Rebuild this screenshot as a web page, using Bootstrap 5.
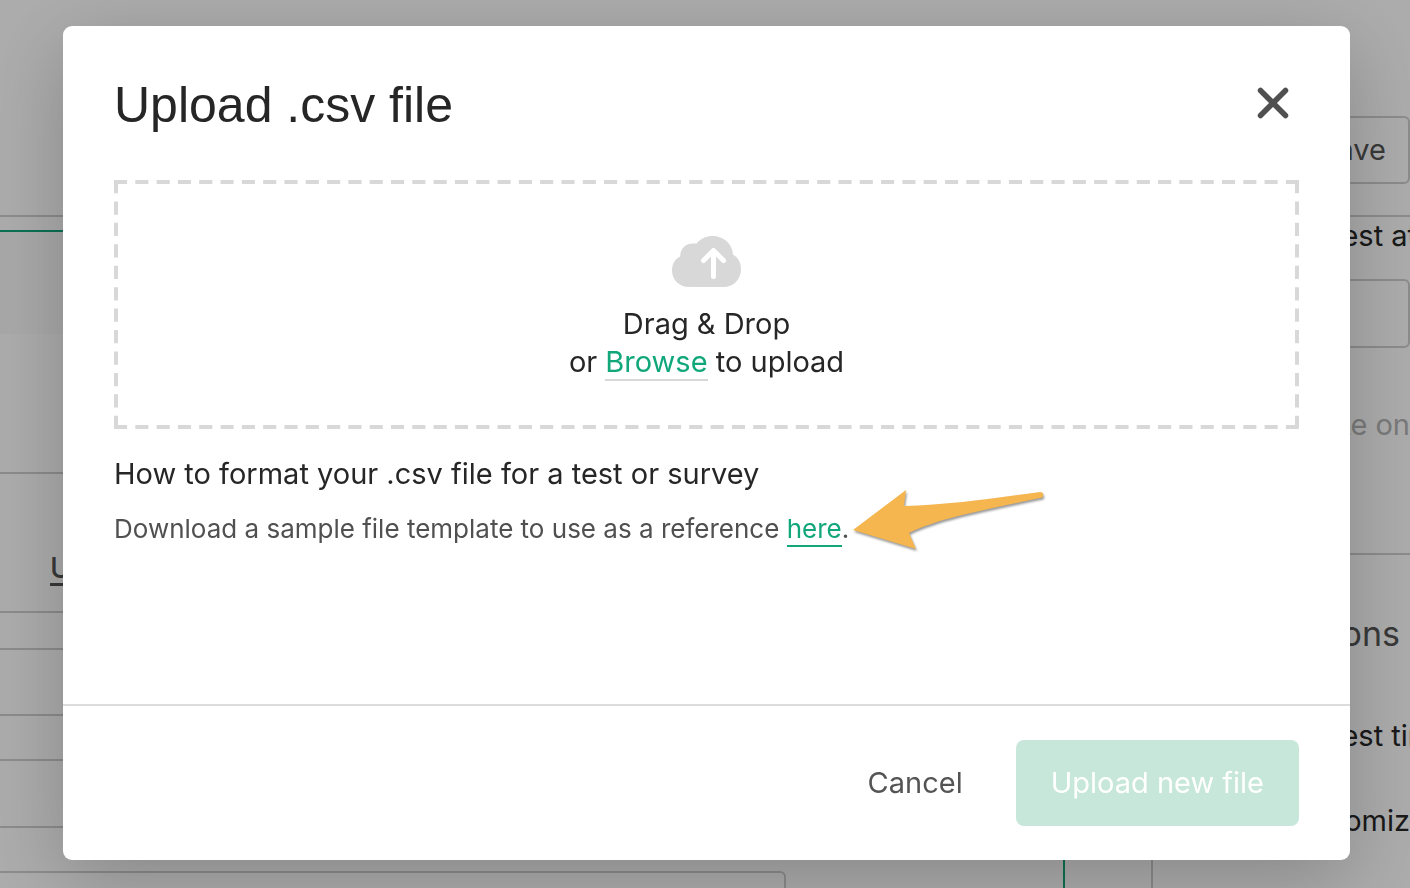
<!DOCTYPE html>
<html lang="en">
<head>
<meta charset="utf-8">
<meta name="viewport" content="width=device-width, initial-scale=1">
<title>Upload .csv file</title>
<link href="https://cdn.jsdelivr.net/npm/bootstrap@5.3.0/dist/css/bootstrap.min.css" rel="stylesheet">
<style>
  body { font-family: Inter, "Liberation Sans", sans-serif; font-size: 29px; line-height: 38px; color: #262626; background: #fff; }
  .page-behind { height: 100vh; overflow: hidden; }
  .rule { border-color: #cfcfcf !important; border-width: 0; border-style: solid; }
  .top-bar { height: 217px; border-bottom-width: 2px; }
  .save-btn { height: 68px; margin-top: 116px; border: 2px solid #cfcfcf; border-radius: 6px; background: #fff; color: #545454; padding: 0 22px; }
  .editor { width: 1065px; margin-top: 13px; border-top: 2px solid #11a77b; border-right: 2px solid #11a77b; }
  .editor-head { height: 102px; background: #fafafa; }
  .line-row { border-bottom: 2px solid #cfcfcf; }
  .h-a { height: 140px; } .h-b { height: 139px; } .h-c { height: 37px; }
  .h-d { height: 66px; } .h-e { height: 45px; } .h-f { height: 67px; }
  .tool-u { padding: 75px 0 0 50px; font-weight: 500; color: #545454; text-decoration: underline; text-decoration-thickness: 3px; text-underline-offset: 5px; }
  .inner-card { width: 786px; height: 80px; margin-top: 43px; border: 2px solid #cfcfcf; border-left: 0; border-radius: 0 6px 0 0; }
  .side { width: 259px; border-left: 2px solid #cfcfcf; white-space: nowrap; }
  .side-test { padding-left: 172px; }
  .side-field { height: 69px; border: 2px solid #cfcfcf; border-radius: 6px; margin: 24px 0 58px; width: 100%; }
  .side-line { border-bottom: 2px solid #cfcfcf; height: 111px; }
  .side-title { font-size: 34px; color: #545454; padding: 60px 10px 64px 0; }
  .side-last { margin-top: 47px; }
  .muted-text { color: #b5b5b5; }
  .shade { background: rgba(0,0,0,.325); }
  .upload-dialog { max-width: none; margin: 26px 60px 28px 63px; }
  .upload-box { border: 0; border-radius: 9px; box-shadow: 0 20px 80px rgba(0,0,0,.22); }
  .upload-head { padding: 47px 51px 0; border: 0; }
  .upload-head h1 { font-family: "Liberation Sans", sans-serif; font-size: 50px; line-height: 64px; font-weight: 400; }
  .close-x { width: 52px; height: 52px; }
  .upload-body { padding: 43px 51px 0; min-height: 567px; }
  .drop-zone { padding: 56px 0 46px; height: 249px; }
  .drop-text { margin-top: 17px; }
  .dashes { stroke: #d8d8d8; stroke-width: 8; fill: none; }
  .dashes line { stroke-dasharray: 8 5; }
  .browse { background: none; border: 0; border-bottom: 2px solid #d8d8d8; color: #11a77b; padding: 0; line-height: 34px; }
  .how-to { font-size: 29px; line-height: 38px; font-weight: 400; margin: 26px 0 18px; }
  .sample { font-size: 26px; line-height: 36px; color: #505050; }
  .sample a { color: #11a77b; text-decoration: none; border-bottom: 2px solid #11a77b; padding-bottom: 1px; }
  .pointer { width: 200px; height: 72px; left: 100%; bottom: 0; margin-bottom: -12px; filter: drop-shadow(1px 2px 1px rgba(0,0,0,.4)); }
  .upload-foot { border-top: 2px solid #dcdcdc; padding: 34px 51px; gap: 18px; border-radius: 0 0 9px 9px; }
  .foot-btn { font-size: 29px; line-height: 38px; padding: 24px 35px; border: 0; border-radius: 8px; }
  .cancel-btn { color: #545454; }
  .foot-btn.send-btn:disabled { background: #c7e7da; color: #fff; opacity: 1; }
</style>
</head>
<body>
<div class="page-behind d-flex flex-column" aria-hidden="true">
  <header class="top-bar rule d-flex justify-content-end align-items-start flex-shrink-0">
    <button class="save-btn" type="button" tabindex="-1">Save</button>
  </header>
  <div class="d-flex justify-content-between flex-grow-1">
    <main class="editor">
      <div class="editor-head"></div>
      <div class="line-row h-a"></div>
      <div class="line-row h-b tool-u">U</div>
      <div class="line-row h-c"></div>
      <div class="line-row h-d"></div>
      <div class="line-row h-e"></div>
      <div class="line-row h-f"></div>
      <div class="inner-card"></div>
    </main>
    <aside class="side">
      <label class="d-block side-test" for="attempts">Test at</label>
      <input class="side-field d-block" id="attempts" type="text" tabindex="-1">
      <div class="muted-text text-end">Take on</div>
      <div class="side-line"></div>
      <div class="side-title text-end">Options</div>
      <div class="side-test">Test tim</div>
      <div class="side-last text-end">Customiz</div>
    </aside>
  </div>
</div>
<div class="shade position-fixed top-0 start-0 w-100 h-100"></div>

<div class="modal d-block" role="dialog" aria-modal="true" aria-labelledby="dialogTitle">
  <div class="modal-dialog upload-dialog">
    <div class="modal-content upload-box">
      <div class="modal-header upload-head d-flex justify-content-between align-items-center">
        <h1 class="modal-title" id="dialogTitle">Upload .csv file</h1>
        <button class="btn p-0 close-x" type="button" aria-label="Close">
          <svg class="d-block" width="52" height="52" viewBox="0 0 52 52" stroke="#505050" stroke-width="5.500" stroke-linecap="round"><path d="M12.500 10.500L37.500 35.500M37.500 10.500L12.500 35.500"/></svg>
        </button>
      </div>
      <div class="modal-body upload-body">
        <div class="drop-zone position-relative text-center">
          <svg class="dashes position-absolute top-0 start-0 w-100 h-100" aria-hidden="true">
            <line x1="0" y1="0" x2="100%" y2="0" pathLength="723"/>
            <line x1="0" y1="100%" x2="100%" y2="100%" pathLength="723"/>
            <line x1="0" y1="0" x2="0" y2="100%" pathLength="151"/>
            <line x1="100%" y1="0" x2="100%" y2="100%" pathLength="151"/>
          </svg>
          <svg class="d-block mx-auto" width="70" height="52" viewBox="0 0 70 52" aria-hidden="true">
            <path fill="#d8d8d8" d="M17 51C7.500 51 0 44 0 34.500C0 28 3 23 8.300 20.500C8 12 14.500 7.300 21 7.500L24.500 7.500C28.500 2.500 34.500 0 40.500 0C51.500 0 60.500 8 61 18.500C66 21.500 69 26.500 69 33C69 43 62 51 51.500 51Z"/>
            <path fill="none" stroke="#fff" stroke-width="5" stroke-linecap="round" stroke-linejoin="round" d="M41.500 40.500V15M31.500 24.500L41.500 14.500L51.500 24.500"/>
          </svg>
          <div class="drop-text">Drag &amp; Drop<br>or <button class="browse" type="button">Browse</button> to upload</div>
        </div>
        <h2 class="how-to">How to format your .csv file for a test or survey</h2>
        <p class="sample mb-0"><span class="position-relative">Download a sample file template to use as a reference <a href="#">here</a>.<svg class="pointer position-absolute" viewBox="0 0 200 72" aria-hidden="true"><path fill="#f5b54f" d="M4 46L57 6L55 22C100 21 145 14 191 8Q195 8 194 12Q194 14 191 14C140 25 90 34 60 49L67 65Z"/></svg></span></p>
      </div>
      <div class="upload-foot d-flex justify-content-end">
        <button class="btn foot-btn cancel-btn" type="button">Cancel</button>
        <button class="btn foot-btn send-btn" type="button" disabled>Upload new file</button>
      </div>
    </div>
  </div>
</div>
<script src="https://cdn.jsdelivr.net/npm/bootstrap@5.3.0/dist/js/bootstrap.bundle.min.js"></script>
</body>
</html>
